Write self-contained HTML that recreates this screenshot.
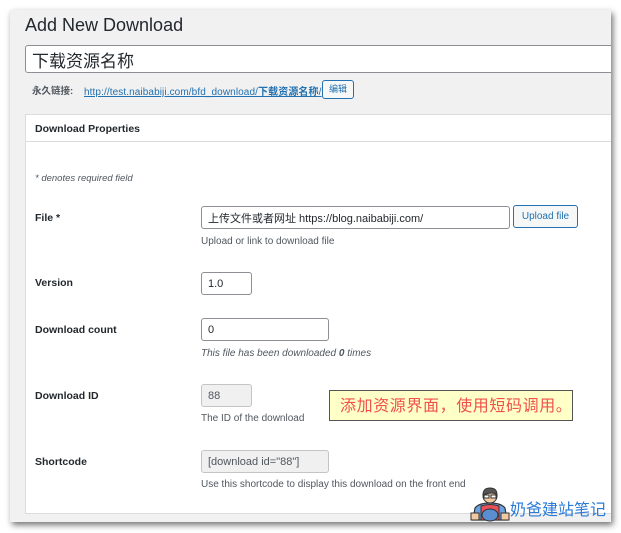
<!DOCTYPE html><html><head><meta charset="utf-8"><style>
body{margin:0;width:621px;height:533px;background:#fff;position:relative;overflow:hidden;font-family:"Liberation Sans","Noto Sans CJK SC",sans-serif;color:#23282d}
.fr{position:absolute;left:10px;top:10px;width:601px;height:512px;background:#f1f1f1;box-shadow:2px 3px 6px rgba(0,0,0,.55);overflow:hidden}
.a{position:absolute;white-space:nowrap}
.in{position:absolute;background:#fff;border:1px solid #8c8f94;border-radius:3px;box-sizing:border-box;font-size:11px;padding-left:6px;display:flex;align-items:center}
.lab{font-size:10.5px;font-weight:bold;color:#23282d}
.d{font-size:10px;color:#50575e}
</style></head><body>
<div class="fr">
<div class="a" style="left:15px;top:5px;font-size:18px;color:#23282d">Add New Download</div>
<div class="in" style="left:15px;top:35px;width:600px;height:28px;font-size:17px;padding-left:6px;border-color:#8c8f94">下载资源名称</div>
<div class="a" style="left:22px;top:73px;font-size:9.5px;color:#50575e;font-weight:bold">永久链接:</div>
<div class="a" style="left:74px;top:73px;font-size:10px;letter-spacing:0.1px;color:#2271b1;text-decoration:underline">http://test.naibabiji.com/bfd_download/<b>下载资源名称</b>/</div>
<div class="a" style="left:312px;top:70px;width:30px;height:17px;border:1px solid #2271b1;border-radius:3px;background:#f6f7f7;font-size:9px;color:#2271b1;text-align:center;line-height:17px">编辑</div>
<div class="a" style="left:15px;top:104px;width:600px;height:398px;background:#fff;border:1px solid #dcdcde"></div>
<div class="a" style="left:15px;top:131px;width:600px;height:1px;background:#dcdcde"></div>
<div class="a lab" style="left:25px;top:113px">Download Properties</div>
<div class="a" style="left:25px;top:163px;font-size:9.5px;font-style:italic;color:#50575e">* denotes required field</div>
<div class="a lab" style="left:25px;top:202px">File *</div>
<div class="in" style="left:191px;top:196px;width:309px;height:23px">上传文件或者网址 https://blog.naibabiji.com/</div>
<div class="a" style="left:503px;top:195px;width:63px;height:21px;border:1px solid #2271b1;border-radius:3px;background:#f6f7f7;font-size:10px;color:#2271b1;text-align:center;line-height:21px">Upload file</div>
<div class="a d" style="left:191px;top:226px">Upload or link to download file</div>
<div class="a lab" style="left:25px;top:267px">Version</div>
<div class="in" style="left:191px;top:262px;width:51px;height:23px">1.0</div>
<div class="a lab" style="left:25px;top:314px">Download count</div>
<div class="in" style="left:191px;top:308px;width:128px;height:23px">0</div>
<div class="a d" style="left:191px;top:338px;font-style:italic">This file has been downloaded <b>0</b> times</div>
<div class="a lab" style="left:25px;top:380px">Download ID</div>
<div class="in" style="left:191px;top:374px;width:51px;height:23px;background:#f0f0f1;border-color:#c3c4c7;color:#50575e">88</div>
<div class="a d" style="left:191px;top:403px">The ID of the download</div>
<div class="a lab" style="left:25px;top:446px">Shortcode</div>
<div class="in" style="left:191px;top:440px;width:128px;height:23px;background:#f0f0f1;border-color:#c3c4c7;color:#50575e">[download id="88"]</div>
<div class="a d" style="left:191px;top:469px">Use this shortcode to display this download on the front end</div>
<div class="a" style="left:319px;top:380px;width:244px;height:31px;background:#ffffc8;border:1px solid #555;font-size:16px;letter-spacing:0.6px;color:#f05050;line-height:31px;padding-left:10px;box-sizing:border-box">添加资源界面，使用短码调用。</div>
<svg class="a" style="left:459px;top:476px" width="42" height="36" viewBox="0 0 42 36">
<path d="M4 34 L6 22 Q10 17 21 17 Q32 17 36 22 L38 34 Z" fill="#6aa3e0" stroke="#333" stroke-width="1.2"/>
<path d="M12 34 L12 20 Q21 17 30 20 L30 34 Z" fill="#e8505a" stroke="#333" stroke-width="1"/>
<ellipse cx="21" cy="29" rx="8" ry="6" fill="#5a8ed0" stroke="#333"/>
<rect x="2" y="27" width="8" height="7" fill="#f2c9a0" stroke="#333"/><rect x="32" y="27" width="8" height="7" fill="#f2c9a0" stroke="#333"/>
<circle cx="21" cy="10" r="7" fill="#f2c9a0" stroke="#333"/>
<path d="M14 9 Q14 2 21 2 Q28 2 28 9 Q24 5 14 9Z" fill="#555" stroke="#333"/>
<rect x="15" y="9" width="5" height="3" fill="#fff" stroke="#333"/><rect x="22" y="9" width="5" height="3" fill="#fff" stroke="#333"/>
</svg>
<div class="a" style="left:500px;top:486px;font-size:16px;color:#2a7ad8">奶爸建站笔记</div>
</div>
</body></html>
